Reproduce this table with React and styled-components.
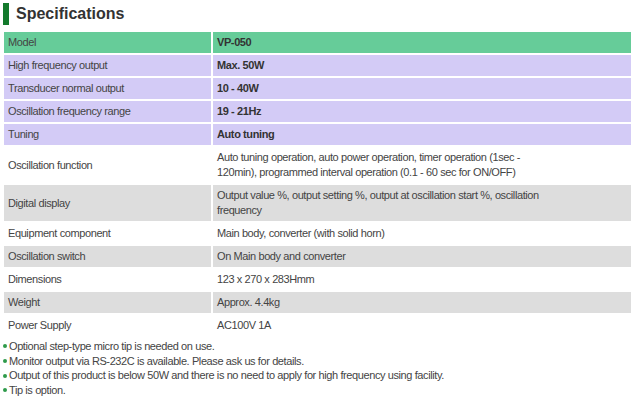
import styled, { createGlobalStyle } from 'styled-components';

const GlobalStyle = createGlobalStyle`
	html, body {
		margin: 0;
		padding: 0;
		background: #fff;
	}
	body {
		font-family: 'Liberation Sans', Arial, sans-serif;
		color: #333;
	}
`;

const specs = [
	{ label: 'Model', value: 'VP-050', tone: 'green', bold: true },
	{ label: 'High frequency output', value: 'Max. 50W', tone: 'lavender', bold: true },
	{ label: 'Transducer normal output', value: '10 - 40W', tone: 'lavender', bold: true },
	{ label: 'Oscillation frequency range', value: '19 - 21Hz', tone: 'lavender', bold: true },
	{ label: 'Tuning', value: 'Auto tuning', tone: 'lavender', bold: true },
	{
		label: 'Oscillation function',
		value: 'Auto tuning operation, auto power operation, timer operation (1sec -\n120min), programmed interval operation (0.1 - 60 sec for ON/OFF)',
		tone: 'white',
	},
	{
		label: 'Digital display',
		value: 'Output value %, output setting %, output at oscillation start %, oscillation\nfrequency',
		tone: 'gray',
	},
	{ label: 'Equipment component', value: 'Main body, converter (with solid horn)', tone: 'white' },
	{ label: 'Oscillation switch', value: 'On Main body and converter', tone: 'gray' },
	{ label: 'Dimensions', value: '123 x 270 x 283Hmm', tone: 'white' },
	{ label: 'Weight', value: 'Approx. 4.4kg', tone: 'gray' },
	{ label: 'Power Supply', value: 'AC100V 1A', tone: 'white' },
];

const notes = [
	'Optional step-type micro tip is needed on use.',
	'Monitor output via RS-232C is available. Please ask us for details.',
	'Output of this product is below 50W and there is no need to apply for high frequency using facility.',
	'Tip is option.',
];

const tones = {
	green: '#66cc99',
	lavender: '#d3cbf6',
	gray: '#dddddd',
	white: '#ffffff',
};

const App = () => {
	return (
		<Page>
			<GlobalStyle />
			<Heading>Specifications</Heading>
			<SpecGrid>
				{specs.map((row) => (
					<Row key={row.label}>
						<Cell $tone={row.tone}>{row.label}</Cell>
						<Cell $tone={row.tone} $bold={row.bold}>
							{row.value}
						</Cell>
					</Row>
				))}
			</SpecGrid>
			<Notes>
				{notes.map((note) => (
					<Note key={note}>{note}</Note>
				))}
			</Notes>
		</Page>
	);
};

const Page = styled.div`
	width: 632px;
	padding-top: 3px;
`;

const Heading = styled.h2`
	display: flex;
	align-items: center;
	gap: 7px;
	height: 22px;
	margin: 0 0 7px 3px;
	font-size: 16px;
	font-weight: bold;
	color: #333;
	&::before {
		content: '';
		width: 6px;
		height: 22px;
		background: #137a2c;
	}
`;

const SpecGrid = styled.div`
	display: grid;
	grid-template-columns: 207px 418px;
	gap: 2px;
	margin-left: 4px;
`;

const Row = styled.div`
	display: contents;
`;

const Cell = styled.div`
	display: flex;
	align-items: center;
	min-height: 21px;
	box-sizing: border-box;
	padding: 3px 4px;
	background: ${({ $tone }) => tones[$tone]};
	font-size: 11px;
	letter-spacing: -0.4px;
	line-height: 15px;
	font-weight: ${({ $bold }) => ($bold ? 'bold' : 'normal')};
	color: ${({ $bold }) => ($bold ? '#333' : '#444')};
	white-space: pre-line;
`;

const Notes = styled.ul`
	list-style: none;
	margin: 3px 0 0 3px;
	padding: 0;
`;

const Note = styled.li`
	display: flex;
	align-items: center;
	font-size: 11px;
	letter-spacing: -0.4px;
	line-height: 14.7px;
	color: #444;
	&::before {
		content: '';
		width: 4px;
		height: 4px;
		margin-right: 2px;
		border-radius: 50%;
		background: #2e9a4a;
		flex-shrink: 0;
	}
`;

export default App;
